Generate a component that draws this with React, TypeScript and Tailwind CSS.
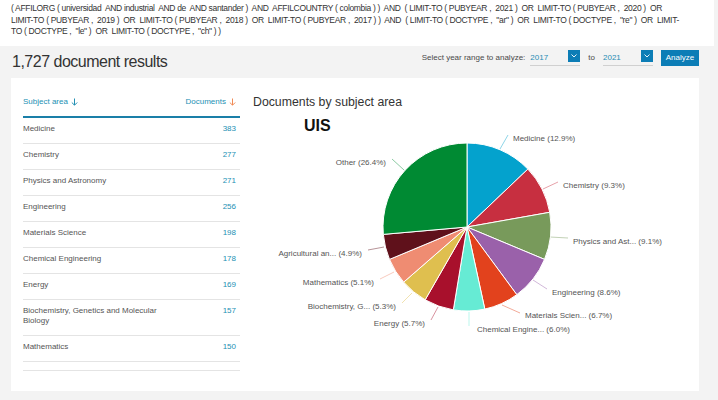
import React from "react";

const rows: { name: string; count: number }[] = [
  { name: "Medicine", count: 383 },
  { name: "Chemistry", count: 277 },
  { name: "Physics and Astronomy", count: 271 },
  { name: "Engineering", count: 256 },
  { name: "Materials Science", count: 198 },
  { name: "Chemical Engineering", count: 178 },
  { name: "Energy", count: 169 },
  { name: "Biochemistry, Genetics and Molecular Biology", count: 157 },
  { name: "Mathematics", count: 150 },
];

type Slice = {
  label: string;
  pct: number;
  color: string;
  line: [number, number, number, number];
  tx: number;
  ty: number;
  anchor: "start" | "end";
};

const slices: Slice[] = [
  { label: "Medicine (12.9%)", pct: 12.9, color: "#04a2cd", line: [500, 149, 508, 135], tx: 513, ty: 138, anchor: "start" },
  { label: "Chemistry (9.3%)", pct: 9.3, color: "#c72f40", line: [543, 189, 558, 182], tx: 563, ty: 185, anchor: "start" },
  { label: "Physics and Ast... (9.1%)", pct: 9.1, color: "#789a5b", line: [550, 237, 568, 238], tx: 573, ty: 241, anchor: "start" },
  { label: "Engineering (8.6%)", pct: 8.6, color: "#9a61aa", line: [533, 280, 547, 289], tx: 552, ty: 292, anchor: "start" },
  { label: "Materials Scien... (6.7%)", pct: 6.7, color: "#e2421d", line: [502, 305, 520, 313], tx: 525, ty: 315, anchor: "start" },
  { label: "Chemical Engine... (6.0%)", pct: 6.0, color: "#66ebd4", line: [469, 312, 469, 326], tx: 477, ty: 329, anchor: "start" },
  { label: "Energy (5.7%)", pct: 5.7, color: "#a8102c", line: [438, 307, 431, 320], tx: 425, ty: 323, anchor: "end" },
  { label: "Biochemistry, G... (5.3%)", pct: 5.3, color: "#dfbf4f", line: [412, 293, 402, 303], tx: 396, ty: 306, anchor: "end" },
  { label: "Mathematics (5.1%)", pct: 5.1, color: "#ef8c72", line: [394, 272, 380, 279], tx: 374, ty: 282, anchor: "end" },
  { label: "Agricultural an... (4.9%)", pct: 4.9, color: "#5f111b", line: [384, 247, 368, 250], tx: 362, ty: 253, anchor: "end" },
  { label: "Other (26.4%)", pct: 26.4, color: "#008a33", line: [404, 170, 392, 159], tx: 386, ty: 162, anchor: "end" },
];

function Pie() {
  const cx = 467;
  const cy = 227;
  const r = 84;
  let acc = 0;
  const paths = slices.map((s) => {
    const a0 = (acc / 100) * Math.PI * 2;
    acc += s.pct;
    const a1 = (acc / 100) * Math.PI * 2;
    const x0 = cx + r * Math.sin(a0);
    const y0 = cy - r * Math.cos(a0);
    const x1 = cx + r * Math.sin(a1);
    const y1 = cy - r * Math.cos(a1);
    const large = a1 - a0 > Math.PI ? 1 : 0;
    return {
      d: `M ${cx} ${cy} L ${x0} ${y0} A ${r} ${r} 0 ${large} 1 ${x1} ${y1} Z`,
      color: s.color,
    };
  });
  return (
    <svg width={446} height={281} viewBox="253 110 446 281" className="block">
      <text x={304} y={131} fontSize={16} fontWeight={700} fill="#111" fontFamily="'Liberation Sans', Arial, sans-serif">
        UIS
      </text>
      {slices.map((s, i) => (
        <line
          key={"l" + i}
          x1={s.line[0]}
          y1={s.line[1]}
          x2={s.line[2]}
          y2={s.line[3]}
          stroke={s.color}
          strokeOpacity={0.45}
          strokeWidth={1}
        />
      ))}
      {paths.map((p, i) => (
        <path key={i} d={p.d} fill={p.color} stroke="#ffffff" strokeWidth={1} strokeLinejoin="round" />
      ))}
      {slices.map((s, i) => (
        <text
          key={"t" + i}
          x={s.tx}
          y={s.ty + 3}
          fontSize={8}
          fill="#555"
          textAnchor={s.anchor}
          fontFamily="'Liberation Sans', Arial, sans-serif"
        >
          {s.label}
        </text>
      ))}
    </svg>
  );
}

function Arrow({ color }: { color: string }) {
  return (
    <svg width="7" height="8" viewBox="0 0 7 8" className="inline-block ml-[3px]">
      <path d="M3.5 0.5 V7 M0.8 4.5 L3.5 7.2 L6.2 4.5" fill="none" stroke={color} strokeWidth="1" />
    </svg>
  );
}

function Select({ value }: { value: string }) {
  return (
    <div className="relative w-[50px] h-[16px] border-b border-[#d0d0d0]">
      <span className="absolute left-0 top-[3px] text-[8px] leading-[10px] text-[#1f8db3]">{value}</span>
      <div className="absolute right-0 top-0 w-[12px] h-[12px] bg-[#0c7db6] flex items-center justify-center">
        <svg width="6" height="4" viewBox="0 0 6 4">
          <path d="M0.5 0.5 L3 3 L5.5 0.5" fill="none" stroke="#fff" strokeWidth="0.9" />
        </svg>
      </div>
    </div>
  );
}

export default function App() {
  return (
    <div className="w-[718px] h-[400px] bg-[#f3f3f3] font-['Liberation_Sans',Arial,sans-serif] overflow-hidden">
      <div className="w-[714px] h-[46px] bg-white pl-[11px] pt-[3px] text-[8.5px] tracking-[-0.33px] leading-[11.5px] text-[#333] whitespace-pre">
        <div>{"( AFFILORG ( universidad  AND industrial  AND de  AND santander )  AND  AFFILCOUNTRY ( colombia ) )  AND  ( LIMIT-TO ( PUBYEAR ,  2021 )  OR  LIMIT-TO ( PUBYEAR ,  2020 )  OR"}</div>
        <div>{"LIMIT-TO ( PUBYEAR ,  2019 )  OR  LIMIT-TO ( PUBYEAR ,  2018 )  OR  LIMIT-TO ( PUBYEAR ,  2017 ) )  AND  ( LIMIT-TO ( DOCTYPE ,  \"ar\" )  OR  LIMIT-TO ( DOCTYPE ,  \"re\" )  OR  LIMIT-"}</div>
        <div>{"TO ( DOCTYPE ,  \"le\" )  OR  LIMIT-TO ( DOCTYPE ,  \"ch\" ) )"}</div>
      </div>
      <div className="h-[32px] flex justify-between pl-[12px] pr-[19px]">
        <div className="self-center text-[16px] tracking-[-0.5px] leading-[20px] text-[#333]">1,727 document results</div>
        <div className="flex items-start mt-[4px]">
          <span className="mt-[3px] text-[8px] leading-[10px] text-[#4a4a4a] mr-[5px]">Select year range to analyze:</span>
          <Select value="2017" />
          <span className="mt-[3px] mx-[8px] text-[8px] leading-[10px] text-[#4a4a4a]">to</span>
          <Select value="2021" />
          <button className="ml-[8px] w-[38px] h-[16px] bg-[#0c7db6] text-white text-[8px] leading-[16px] text-center">Analyze</button>
        </div>
      </div>
      <div className="ml-[11px] w-[688px] h-[313px] bg-white flex">
        <div className="ml-[12px] w-[217px] pt-[19px]">
          <div className="flex justify-between pb-[9px] border-b-2 border-[#1a7fa8] text-[8px] leading-[10px] text-[#2390b4]">
            <span className="flex items-center">Subject area<Arrow color="#2390b4" /></span>
            <span className="flex items-center pr-[4px]">Documents<Arrow color="#f08a55" /></span>
          </div>
          {rows.map((r) => (
            <div key={r.name} className="flex justify-between border-b border-[#e4e4e4] pt-[6px] pb-[9px] text-[8px] leading-[10px]">
              <span className="w-[150px] text-[#555]">{r.name}</span>
              <span className="pr-[4px] text-[#2390b4]">{r.count}</span>
            </div>
          ))}
          <div className="h-[9px] border-b border-[#e4e4e4]" />
        </div>
        <div className="ml-[13px] w-[446px]">
          <div className="pt-[16px] h-[32px] text-[12.3px] leading-[16px] text-[#333]">Documents by subject area</div>
          <Pie />
        </div>
      </div>
    </div>
  );
}
